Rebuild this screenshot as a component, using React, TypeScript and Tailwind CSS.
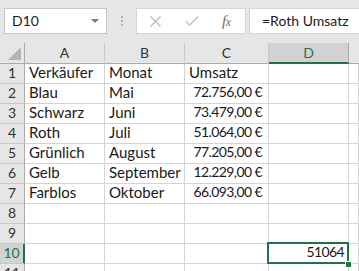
import React from "react";

const rows: [string, string, string][] = [
  ["Verkäufer", "Monat", "Umsatz"],
  ["Blau", "Mai", "72.756,00 €"],
  ["Schwarz", "Juni", "73.479,00 €"],
  ["Roth", "Juli", "51.064,00 €"],
  ["Grünlich", "August", "77.205,00 €"],
  ["Gelb", "September", "12.229,00 €"],
  ["Farblos", "Oktober", "66.093,00 €"],
  ["", "", ""],
  ["", "", ""],
  ["", "", ""],
  ["", "", ""],
];

function Cell({ children, right }: { children?: React.ReactNode; right?: boolean }) {
  return (
    <div
      className={
        "h-[20px] border-r border-b border-[#d4d4d4] bg-white flex items-end pb-[2px] overflow-hidden whitespace-nowrap text-[#1a1a1a] " +
        (right ? "justify-end pr-[6px] pl-[2px] text-[14px] tracking-[-0.6px]" : "justify-start px-[4px]")
      }
    >
      {children}
    </div>
  );
}

export default function App() {
  return (
    <div className="w-[359px] h-[271px] overflow-hidden bg-[#e6e6e6] font-['Lato','Liberation_Sans',sans-serif] text-[15px] leading-[18px]">
      {/* formula bar */}
      <div className="h-[43px] flex items-start pt-[8px]">
        <div className="ml-[4px] w-[103px] h-[26px] border border-[#c6c6c6] bg-white flex items-center justify-between pl-[7px] pr-[7px] text-[#1a1a1a] text-[14px]">
          <span>D10</span>
          <svg width="8" height="4" viewBox="0 0 8 4">
            <path d="M0 0 H8 L4 4 Z" fill="#7a7a7a" />
          </svg>
        </div>
        <div className="ml-[14px] h-[26px] flex flex-col justify-center gap-[2px]">
          <div className="w-[2px] h-[2px] bg-[#b4b4b4]" />
          <div className="w-[2px] h-[2px] bg-[#b4b4b4]" />
          <div className="w-[2px] h-[2px] bg-[#b4b4b4]" />
        </div>
        <div className="ml-[13px] w-[110px] h-[26px] border border-[#d4d4d4] bg-white flex items-center">
          <svg className="ml-[13px]" width="11" height="11" viewBox="0 0 11 11">
            <path d="M0.5 0.5 L10.5 10.5 M10.5 0.5 L0.5 10.5" stroke="#b9b9b9" strokeWidth="1.3" />
          </svg>
          <svg className="ml-[24px]" width="14" height="10" viewBox="0 0 14 10">
            <path d="M0.8 5.2 L4.6 9 L13.2 0.6" stroke="#c3c3c3" strokeWidth="1.4" fill="none" />
          </svg>
          <span className="ml-[23px] font-['Liberation_Serif',serif] italic text-[15px] text-[#6a6a6a] tracking-[-0.5px]">
            f<span className="text-[12px]">x</span>
          </span>
        </div>
        <div className="ml-[3px] flex-1 h-[26px] border border-r-0 border-[#d4d4d4] bg-white flex items-center pl-[12px] text-[#1a1a1a] text-[14px] whitespace-nowrap">
          =Roth Umsatz
        </div>
      </div>

      {/* grid */}
      <div className="grid grid-cols-[25px_80px_80px_84px_80px_1fr]">
        {/* header row */}
        <div className="h-[21px] border-r border-b border-[#ababab] bg-[#e6e6e6] relative">
          <svg className="absolute left-[8px] top-[4px]" width="13" height="13" viewBox="0 0 13 13">
            <path d="M13 0 V13 H0 Z" fill="#b4b4b4" />
          </svg>
        </div>
        {["A", "B", "C"].map((c) => (
          <div
            key={c}
            className="h-[21px] border-r border-r-[#c8c8c8] border-b border-b-[#ababab] bg-[#e6e6e6] flex items-center justify-center text-[#333] text-[14px]"
          >
            {c}
          </div>
        ))}
        <div className="h-[21px] border-r border-r-[#ababab] border-b-2 border-b-[#217346] bg-[#d2d2d2] flex items-center justify-center text-[#217346] text-[14px] pt-[1px]">
          D
        </div>
        <div className="h-[21px] border-b border-b-[#ababab] bg-[#e6e6e6]" />

        {rows.map((r, i) => {
          const sel = i === 9;
          return (
            <React.Fragment key={i}>
              <div
                className={
                  "h-[20px] border-b border-[#c8c8c8] flex items-end justify-center pb-[1px] text-[14px] " +
                  (sel
                    ? "bg-[#d2d2d2] text-[#217346] border-r-2 border-r-[#217346]"
                    : "bg-[#e6e6e6] text-[#333] border-r border-r-[#ababab]")
                }
              >
                {i + 1}
              </div>
              <Cell>{r[0]}</Cell>
              <Cell>{r[1]}</Cell>
              <Cell right={i > 0}>{r[2]}</Cell>
              {sel ? (
                <div className="h-[20px] border-r border-b border-[#d4d4d4] bg-white relative">
                  <div className="absolute left-[-2px] top-[-2px] w-[82px] h-[22px] border-2 border-[#217346] flex items-end justify-end pr-[3px] pb-[1px] text-[#1a1a1a] text-[14px] tracking-[-0.6px]">
                    51064
                  </div>
                  <div className="absolute left-[76px] top-[17px] w-[7px] h-[7px] bg-[#217346] border border-white" />
                </div>
              ) : (
                <Cell />
              )}
              <Cell />
            </React.Fragment>
          );
        })}
      </div>
    </div>
  );
}
